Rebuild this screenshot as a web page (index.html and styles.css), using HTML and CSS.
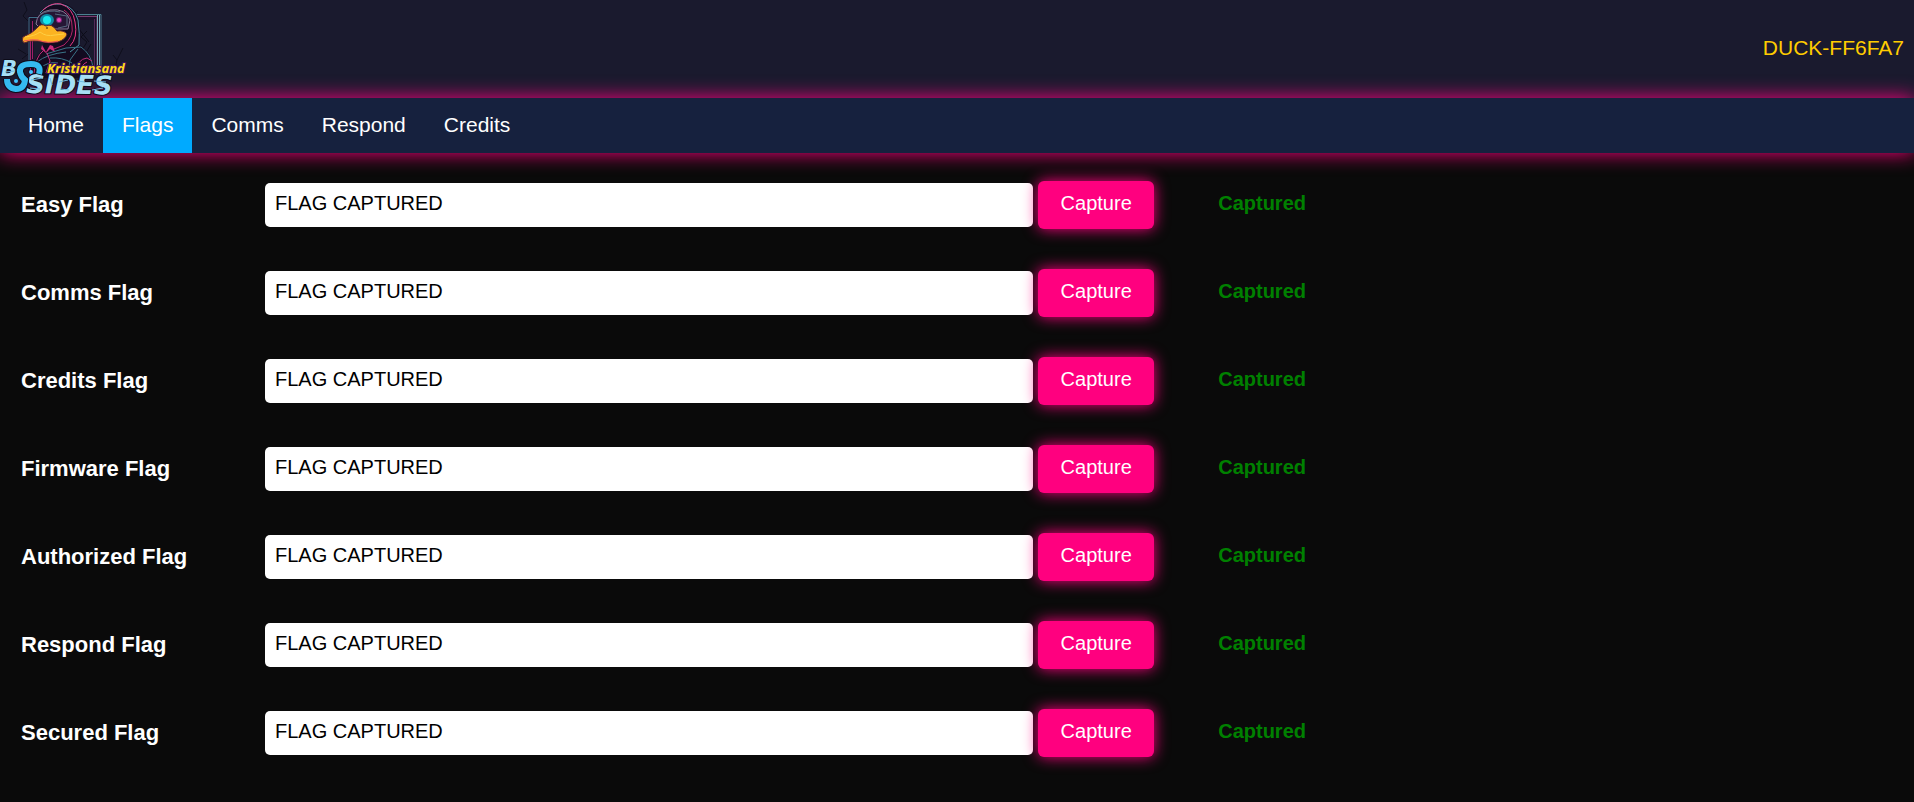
FILE: index.html
```html
<!DOCTYPE html>
<html lang="en">
<head>
<meta charset="utf-8">
<title>Flags</title>
<link rel="stylesheet" href="styles.css">
</head>
<body>
<header class="header">
  <svg class="logo" viewBox="0 0 126 98" role="img" aria-label="BSides Kristiansand">
    <g fill="none" stroke="#0e0e1b" stroke-width="1">
      <path d="M24 2l3 8-4 6 5 5M63 4l5 3M68 11l7 3 3-3M87 31l-6 6 6 5-5 8M77 29l10 13M18 49l8 5M22 59l6-5M123 48l-6 12-2 10M117 60l-4-5M70 50l8-8"/>
    </g>
    <path d="M28 16h74v58H28z" fill="#1a1029"/>
    <path d="M34 20h60v50H34z" fill="#1a1a2e"/>
    <path d="M87 31l-6 6 6 5-5 8M79 29l10 13M84 56l7-12" fill="none" stroke="#0c0c18"/>
    <g fill="none" stroke-width="1">
      <path d="M40 17.500h-11v50" stroke="#3d6f86"/>
      <path d="M30.500 40v35M32.500 21v38" stroke="#9c2268"/>
      <path d="M71 16.500h26v58" stroke="#7b3c70"/>
      <path d="M74 14.500h27v61" stroke="#4a8090"/>
      <path d="M97.500 15v57M99.500 15v57" stroke="#78a9b8"/>
      <path d="M94.500 19v52" stroke="#522a58"/>
    </g>
    <path d="M39 21Q42 6 53 4Q67 0 75 11Q82 22 80 45Q91 52 94 67L92 78H34Q30 62 41 52L44 42L38 29Z" fill="#130b20"/>
    <path d="M40 13Q48 3 60 4Q74 6 78 20Q80 34 79 45L70 52" fill="none" stroke="#4c93a5"/>
    <path d="M43 10Q52 2 61 4Q73 8 75 22Q78 38 70 46" fill="none" stroke="#ea3a86"/>
    <path d="M64 10Q72 15 72 26Q74 36 64 45L54 49" fill="none" stroke="#b32468"/>
    <path d="M36 24Q37 12 50 10Q66 8 70 20L68 29L57 29L39 27Z" fill="#251635" stroke="#8a7896"/>
    <path d="M40 15Q48 9 60 12M55 14l12 2v10l-9 2" fill="none" stroke="#576980"/>
    <ellipse cx="47" cy="20" rx="7" ry="6" fill="#128aa5"/>
    <ellipse cx="47" cy="20" rx="4" ry="4" fill="#15e8ef"/>
    <circle cx="59" cy="20" r="3" fill="#772373"/>
    <circle cx="59" cy="20" r="2" fill="#f045ba"/>
    <path d="M23 37Q33 33 38 27Q41 23 46 26Q52 23 57 31Q64 30 67 34Q66 39 58 42Q49 44 38 41Q30 40 24 43Q21 40 23 37Z" fill="#fcb321" stroke="#5d2430"/>
    <path d="M24 41Q32 39 38 40Q48 44 58 41" fill="none" stroke="#f15655" stroke-width="1"/>
    <path d="M25 37Q35 36 40 32Q46 37 55 35L64 34" fill="none" stroke="#ffcf43"/>
    <circle cx="47" cy="28" r="1" fill="#78500f"/>
    <path d="M42 45l4 7 4-7 3 1 2 6-5-3-4 4-5-4z" fill="#c92d7c"/>
    <g fill="none" stroke="#3a7488">
      <path d="M46 54L66 48 81 47Q91 54 93 67M37 62Q47 54 66 52M50 58Q62 57 72 63M78 49L70 60 68 73M39 69Q48 61 58 63"/>
    </g>
    <g fill="none" stroke="#c12f7a">
      <path d="M47 53l3 8-4 12M76 73Q77 59 87 58L92 61M82 73Q80 65 87 62M34 73Q36 56 43 51"/>
    </g>
    <text class="logo-name" x="1" y="76" font-size="21">B</text>
    <text class="logo-name" x="26" y="93" font-size="26" transform="rotate(1 26 93)">SIDES</text>
    <g fill="none">
      <path d="M40 75Q43 64 31 64Q19 64 20 72Q21 77 25 80Q24 89 16 89Q7 88 7 79" stroke="#0c0b19" stroke-width="8"/>
      <path d="M39 74Q42 64 31 64Q19 64 20 72Q21 77 25 80Q24 89 16 89Q7 88 7 79" stroke="#35baf0" stroke-width="6"/>
    </g>
    <circle cx="31" cy="72" r="2" fill="#41c5ff"/>
    <circle cx="16" cy="81" r="2" fill="#41c5ff"/>
    <path d="M4 66l9 1M5 72l10-1M31 80l11-2M30 88l10 1M50 78l2 7M59 82l9-2M60 89l9 1M77 81l8 1M94 81l12 1M92 90l11-2" fill="none" stroke="#6eb9df"/>
    <text class="logo-city" x="47" y="73">Kristiansand</text>
  </svg>
  <span class="device">DUCK-FF6FA7</span>
</header>
<nav class="nav">
  <a href="#home">Home</a>
  <a href="#flags" class="active" aria-current="page">Flags</a>
  <a href="#comms">Comms</a>
  <a href="#respond">Respond</a>
  <a href="#credits">Credits</a>
</nav>
<main class="flags">
  <form class="flag"><label for="easy">Easy Flag</label><div class="entry"><input id="easy" type="text" value="FLAG CAPTURED"><button type="button">Capture</button></div><output>Captured</output></form>
  <form class="flag"><label for="comms">Comms Flag</label><div class="entry"><input id="comms" type="text" value="FLAG CAPTURED"><button type="button">Capture</button></div><output>Captured</output></form>
  <form class="flag"><label for="credits">Credits Flag</label><div class="entry"><input id="credits" type="text" value="FLAG CAPTURED"><button type="button">Capture</button></div><output>Captured</output></form>
  <form class="flag"><label for="firmware">Firmware Flag</label><div class="entry"><input id="firmware" type="text" value="FLAG CAPTURED"><button type="button">Capture</button></div><output>Captured</output></form>
  <form class="flag"><label for="authorized">Authorized Flag</label><div class="entry"><input id="authorized" type="text" value="FLAG CAPTURED"><button type="button">Capture</button></div><output>Captured</output></form>
  <form class="flag"><label for="respond">Respond Flag</label><div class="entry"><input id="respond" type="text" value="FLAG CAPTURED"><button type="button">Capture</button></div><output>Captured</output></form>
  <form class="flag"><label for="secured">Secured Flag</label><div class="entry"><input id="secured" type="text" value="FLAG CAPTURED"><button type="button">Capture</button></div><output>Captured</output></form>
</main>
</body>
</html>
```
FILE: styles.css
```css
* {
  box-sizing: border-box;
}

body {
  margin: 0;
  background: #0a0a0a;
  color: #fff;
  font-family: "Liberation Sans", Arial, sans-serif;
  font-size: 20px;
}

.header {
  display: flex;
  align-items: center;
  justify-content: space-between;
  padding-right: 10px;
  background: #1a1a2e;
}

.logo {
  position: relative;
  z-index: 1;
  display: block;
  width: 126px;
  height: 98px;
  overflow: visible;
}

.logo-name {
  fill: #a6dff5;
  stroke: #0c0b19;
  stroke-width: 2px;
  paint-order: stroke;
  font-family: "DejaVu Sans", sans-serif;
  font-style: italic;
  font-weight: 700;
}

.logo-city {
  fill: #ffdc17;
  stroke: #3b1560;
  stroke-width: 2px;
  paint-order: stroke;
  font-family: "Noto Sans", sans-serif;
  font-size: 13px;
  font-style: italic;
  font-weight: 700;
}

.device {
  padding-bottom: 2px;
  color: #fc0;
  font-size: 21px;
}

.nav {
  position: relative;
  display: flex;
  padding-left: 9px;
  background: #16213e;
  box-shadow: 0 0 20px #ff007f;
  font-size: 21px;
}

.nav a {
  padding: 15px 19px 16px;
  color: #fff;
  line-height: 24px;
  text-decoration: none;
}

.nav .active {
  background: #0af;
}

.flags {
  display: flex;
  flex-direction: column;
  gap: 40px;
  padding: 28px 21px;
}

.flag {
  display: grid;
  grid-template-columns: 244px 47.5% 1fr;
  align-items: center;
}

.flag label {
  font-size: 22px;
  font-weight: 700;
}

.entry {
  display: flex;
  align-items: center;
  gap: 5px;
}

.entry input {
  flex: 1;
  min-width: 0;
  height: 44px;
  padding: 0 10px 4px;
  border: 0;
  border-radius: 5px;
  background: #fff;
  color: #000;
  font: inherit;
}

.entry button {
  width: 116px;
  height: 48px;
  padding: 0 0 3px;
  border: 0;
  border-radius: 6px;
  background: #ff007f;
  box-shadow: 0 0 15px #ff007f;
  color: #fff;
  font: inherit;
}

.flag output {
  padding: 0 0 4px 64px;
  color: green;
  font-weight: 700;
}
```
